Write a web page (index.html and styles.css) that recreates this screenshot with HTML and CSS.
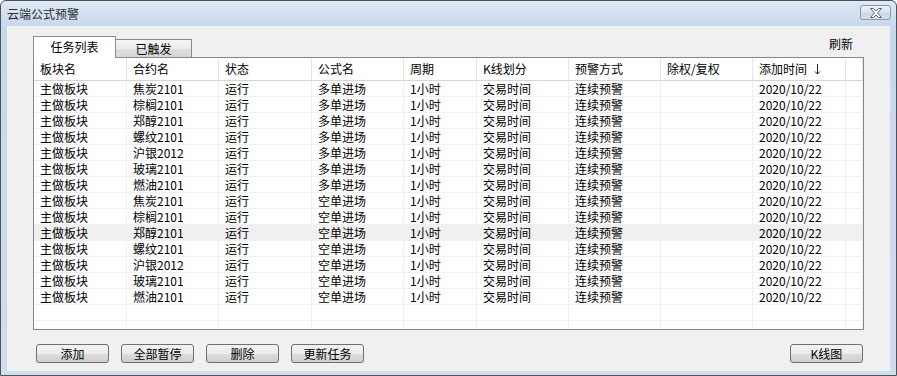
FILE: index.html
```html
<!DOCTYPE html>
<html lang="zh-CN">
<head>
    <meta charset="UTF-8">
    <title>云端公式预警</title>
    <link rel="stylesheet" href="styles.css">
</head>
<body>

<div class="window">
    <div class="titlebar">
        <span class="title">云端公式预警</span>
        <button class="close">
            <svg width="14" height="10" viewBox="0 0 14 10">
                <path d="M1.5 0.5 L4.5 0.5 L7 3 L9.5 0.5 L12.5 0.5 L8.5 5 L12.5 9.5 L9.5 9.5 L7 7 L4.5 9.5 L1.5 9.5 L5.5 5 Z" fill="#fff" stroke="#5c6674" stroke-width="1" stroke-linejoin="round"/>
            </svg>
        </button>
    </div>

    <div class="client">
        <div class="tabs">
            <div class="tab active">任务列表</div>
            <div class="tab">已触发</div>
            <div class="refresh">刷新</div>
        </div>

        <div class="list">
            <div class="row head">
                <div class="cell">板块名</div>
                <div class="cell">合约名</div>
                <div class="cell">状态</div>
                <div class="cell">公式名</div>
                <div class="cell">周期</div>
                <div class="cell">K线划分</div>
                <div class="cell">预警方式</div>
                <div class="cell">除权/复权</div>
                <div class="cell">添加时间
                    <svg class="sort" width="7" height="11" viewBox="0 0 7 11"><path d="M3.5 0 V10 M1 7.5 L3.5 10 L6 7.5" fill="none" stroke="#222" stroke-width="1"/></svg>
                </div>
                <div class="cell"></div>
            </div>
            <div class="row"><div class="cell">主做板块</div><div class="cell">焦炭2101</div><div class="cell">运行</div><div class="cell">多单进场</div><div class="cell">1小时</div><div class="cell">交易时间</div><div class="cell">连续预警</div><div class="cell"></div><div class="cell">2020/10/22</div><div class="cell"></div></div>
            <div class="row"><div class="cell">主做板块</div><div class="cell">棕榈2101</div><div class="cell">运行</div><div class="cell">多单进场</div><div class="cell">1小时</div><div class="cell">交易时间</div><div class="cell">连续预警</div><div class="cell"></div><div class="cell">2020/10/22</div><div class="cell"></div></div>
            <div class="row"><div class="cell">主做板块</div><div class="cell">郑醇2101</div><div class="cell">运行</div><div class="cell">多单进场</div><div class="cell">1小时</div><div class="cell">交易时间</div><div class="cell">连续预警</div><div class="cell"></div><div class="cell">2020/10/22</div><div class="cell"></div></div>
            <div class="row"><div class="cell">主做板块</div><div class="cell">螺纹2101</div><div class="cell">运行</div><div class="cell">多单进场</div><div class="cell">1小时</div><div class="cell">交易时间</div><div class="cell">连续预警</div><div class="cell"></div><div class="cell">2020/10/22</div><div class="cell"></div></div>
            <div class="row"><div class="cell">主做板块</div><div class="cell">沪银2012</div><div class="cell">运行</div><div class="cell">多单进场</div><div class="cell">1小时</div><div class="cell">交易时间</div><div class="cell">连续预警</div><div class="cell"></div><div class="cell">2020/10/22</div><div class="cell"></div></div>
            <div class="row"><div class="cell">主做板块</div><div class="cell">玻璃2101</div><div class="cell">运行</div><div class="cell">多单进场</div><div class="cell">1小时</div><div class="cell">交易时间</div><div class="cell">连续预警</div><div class="cell"></div><div class="cell">2020/10/22</div><div class="cell"></div></div>
            <div class="row"><div class="cell">主做板块</div><div class="cell">燃油2101</div><div class="cell">运行</div><div class="cell">多单进场</div><div class="cell">1小时</div><div class="cell">交易时间</div><div class="cell">连续预警</div><div class="cell"></div><div class="cell">2020/10/22</div><div class="cell"></div></div>
            <div class="row"><div class="cell">主做板块</div><div class="cell">焦炭2101</div><div class="cell">运行</div><div class="cell">空单进场</div><div class="cell">1小时</div><div class="cell">交易时间</div><div class="cell">连续预警</div><div class="cell"></div><div class="cell">2020/10/22</div><div class="cell"></div></div>
            <div class="row"><div class="cell">主做板块</div><div class="cell">棕榈2101</div><div class="cell">运行</div><div class="cell">空单进场</div><div class="cell">1小时</div><div class="cell">交易时间</div><div class="cell">连续预警</div><div class="cell"></div><div class="cell">2020/10/22</div><div class="cell"></div></div>
            <div class="row selected"><div class="cell">主做板块</div><div class="cell">郑醇2101</div><div class="cell">运行</div><div class="cell">空单进场</div><div class="cell">1小时</div><div class="cell">交易时间</div><div class="cell">连续预警</div><div class="cell"></div><div class="cell">2020/10/22</div><div class="cell"></div></div>
            <div class="row"><div class="cell">主做板块</div><div class="cell">螺纹2101</div><div class="cell">运行</div><div class="cell">空单进场</div><div class="cell">1小时</div><div class="cell">交易时间</div><div class="cell">连续预警</div><div class="cell"></div><div class="cell">2020/10/22</div><div class="cell"></div></div>
            <div class="row"><div class="cell">主做板块</div><div class="cell">沪银2012</div><div class="cell">运行</div><div class="cell">空单进场</div><div class="cell">1小时</div><div class="cell">交易时间</div><div class="cell">连续预警</div><div class="cell"></div><div class="cell">2020/10/22</div><div class="cell"></div></div>
            <div class="row"><div class="cell">主做板块</div><div class="cell">玻璃2101</div><div class="cell">运行</div><div class="cell">空单进场</div><div class="cell">1小时</div><div class="cell">交易时间</div><div class="cell">连续预警</div><div class="cell"></div><div class="cell">2020/10/22</div><div class="cell"></div></div>
            <div class="row"><div class="cell">主做板块</div><div class="cell">燃油2101</div><div class="cell">运行</div><div class="cell">空单进场</div><div class="cell">1小时</div><div class="cell">交易时间</div><div class="cell">连续预警</div><div class="cell"></div><div class="cell">2020/10/22</div><div class="cell"></div></div>
            <div class="row"><div class="cell"></div><div class="cell"></div><div class="cell"></div><div class="cell"></div><div class="cell"></div><div class="cell"></div><div class="cell"></div><div class="cell"></div><div class="cell"></div><div class="cell"></div></div>
            <div class="row"><div class="cell"></div><div class="cell"></div><div class="cell"></div><div class="cell"></div><div class="cell"></div><div class="cell"></div><div class="cell"></div><div class="cell"></div><div class="cell"></div><div class="cell"></div></div>
        </div>

        <div class="actions">
            <button class="btn">添加</button>
            <button class="btn">全部暂停</button>
            <button class="btn">删除</button>
            <button class="btn">更新任务</button>
            <button class="btn chart">K线图</button>
        </div>
    </div>
</div>

</body>
</html>
```

FILE: styles.css
```css
body {
    margin: 0;
    font-family: "Noto Sans CJK SC", "Liberation Sans", sans-serif;
    font-size: 12px;
    color: #000;
}
.window {
    width: 897px;
    height: 376px;
    box-sizing: border-box;
    border: 1px solid #4d535b;
    border-radius: 6px 6px 0 0;
    background: linear-gradient(#dfe9f6, #c7d7ec 26px, #d0ddee);
    padding: 0 6px 4px;
    display: flex;
    flex-direction: column;
}
.titlebar {
    height: 25px;
    display: flex;
    align-items: center;
    justify-content: space-between;
}
.title {
    color: #2b2b2b;
    line-height: 14px;
}
.close {
    align-self: flex-start;
    margin-top: 4px;
    margin-right: -1px;
    width: 31px;
    height: 15px;
    padding: 0;
    border: 1px solid #8d96a3;
    border-radius: 3px;
    background: linear-gradient(#eef3f9, #d9e3ef 50%, #cbd7e6 51%, #d6e0ec);
    display: flex;
    align-items: center;
    justify-content: center;
}
.client {
    flex: 1;
    background-color: #f0f0f0;
    padding: 10px 0 0 26px;
}
.tabs {
    width: 831px;
    height: 21px;
    display: flex;
    align-items: flex-end;
}
.tab {
    box-sizing: border-box;
    height: 18px;
    width: 76px;
    border-top: 1px solid #898c95;
    border-right: 1px solid #898c95;
    background: linear-gradient(#f4f4f4, #ebebeb 50%, #dedede 51%, #d6d6d6);
    text-align: center;
    line-height: 17px;
}
.tab.active {
    position: relative;
    z-index: 1;
    width: 83px;
    height: 22px;
    margin-bottom: -1px;
    border-left: 1px solid #898c95;
    background: #fff;
    line-height: 20px;
}
.refresh {
    margin-left: auto;
    align-self: flex-start;
    margin-top: 1px;
    padding-right: 11px;
    line-height: 14px;
}
.list {
    width: 831px;
    height: 273px;
    box-sizing: border-box;
    border: 1px solid #828790;
    background: #fff;
    overflow: hidden;
}
.row {
    display: grid;
    grid-template-columns: 93px 92px 93px 92px 73px 92px 92px 92px 93px 17px;
    height: 16px;
    box-sizing: border-box;
    border-bottom: 1px solid #f0f0f0;
}
.row.selected {
    background: #f0f0f0;
}
.cell {
    box-sizing: border-box;
    padding: 1px 0 0 6px;
    border-right: 1px solid #f0f0f0;
    line-height: 14px;
    white-space: nowrap;
}
.row.head {
    height: 23px;
    border-bottom: 1px solid #d5d5d5;
}
.row.head .cell {
    border-right-color: #e5e5e5;
    padding-top: 0;
    line-height: 22px;
}
.sort {
    margin-left: 4px;
    vertical-align: -1px;
}
.actions {
    width: 831px;
    margin-top: 14px;
    padding-left: 3px;
    box-sizing: border-box;
    display: flex;
    gap: 12px;
}
.btn {
    width: 73px;
    height: 19px;
    padding: 0;
    border: 1px solid #707070;
    border-radius: 3px;
    background: linear-gradient(#f2f2f2, #ebebeb 50%, #dddddd 51%, #cfcfcf);
    font: inherit;
    color: #000;
    line-height: 16px;
}
.btn.chart {
    margin-left: auto;
    margin-right: 1px;
}
```
